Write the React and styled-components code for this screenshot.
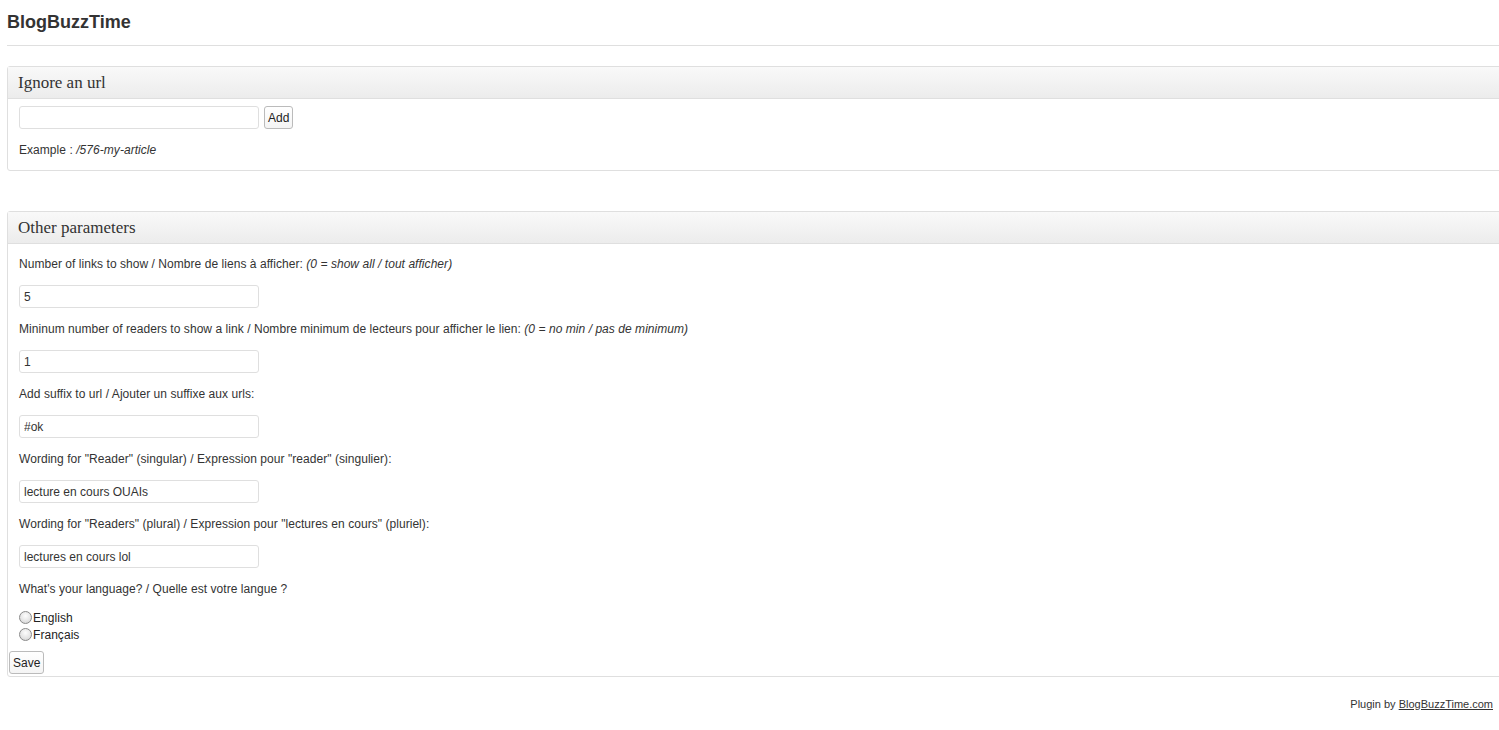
import React from "react";
import styled, { createGlobalStyle } from "styled-components";

const Global = createGlobalStyle`
  html, body { margin: 0; padding: 0; background: #fff; overflow: hidden; }
  body { font-family: "Liberation Sans", Arial, sans-serif; font-size: 12px; color: #333; }
  * { box-sizing: border-box; }
`;

const Page = styled.div`
  padding: 0 0 0 7px;
  width: 1499px;
  overflow: hidden;
`;

const Title = styled.h2`
  margin: 0;
  padding: 11px 0 0 0;
  height: 45px;
  font-size: 18px;
  font-weight: bold;
  color: #333;
  line-height: 22px;
`;

const Rule = styled.div`
  height: 1px;
  background: #dfdfdf;
  margin-bottom: 20px;
`;

const Panel = styled.div`
  border: 1px solid #dfdfdf;
  border-radius: 3px;
  background: #fff;
  width: 1510px;
  margin-bottom: ${(p) => p.$mb || 0}px;
`;

const PanelHeader = styled.h3`
  margin: 0;
  height: 32px;
  padding: 1px 10px 0 10px;
  display: flex;
  align-items: center;
  font-family: Georgia, "Liberation Serif", "DejaVu Serif", serif;
  font-weight: normal;
  font-size: 17px;
  color: #333;
  background: linear-gradient(to bottom, #f9f9f9, #ececec);
  border-bottom: 1px solid #dfdfdf;
`;

const Inside = styled.div`
  padding: ${(p) => p.$pad || "0 11px"};
`;

const InlineRow = styled.div`
  display: flex;
  align-items: center;
  gap: 5px;
`;

const TextInput = styled.input`
  width: 240px;
  height: 23px;
  border: 1px solid #dfdfdf;
  border-radius: 3px;
  padding: 2px 4px;
  font-family: "Liberation Sans", Arial, sans-serif;
  font-size: 12px;
  color: #333;
  background: #fff;
  outline: none;
`;

const Button = styled.button`
  height: 23px;
  padding: 0 3px;
  border: 1px solid #bbb;
  border-radius: 3px;
  background: linear-gradient(to bottom, #fff, #f4f4f4);
  font-family: "Liberation Sans", Arial, sans-serif;
  font-size: 12px;
  color: #222;
  cursor: pointer;
`;

const Text = styled.p`
  margin: ${(p) => p.$mt || 0}px 0 0 0;
  padding-top: 1px;
  line-height: 18px;
  font-size: 12px;
  letter-spacing: 0.05px;
  color: #333;
`;

const Field = styled.div`
  display: flex;
  flex-direction: column;
  align-items: flex-start;
  gap: 12px;
  margin-top: 11px;
  &:first-child { margin-top: 10px; }
`;

const RadioList = styled.div`
  display: flex;
  flex-direction: column;
  margin-top: 11px;
`;

const RadioLabel = styled.label`
  display: flex;
  align-items: center;
  height: 17px;
  font-size: 12px;
  letter-spacing: 0.05px;
  color: #222;
`;

const Radio = styled.input`
  appearance: none;
  width: 13px;
  height: 13px;
  margin: 0 1px 0 0;
  border-radius: 50%;
  border: 1px solid #8a8a8a;
  background: radial-gradient(circle at 50% 35%, #fdfdfd 0%, #e6e6e6 55%, #cfcfcf 100%);
`;

const SaveRow = styled.div`
  padding: 8px 1px 2px 1px;
`;

const Footer = styled.div`
  display: flex;
  justify-content: flex-end;
  padding: 21px 6px 0 0;
  font-size: 11px;
  color: #333;
  a { color: #333; text-decoration: underline; }
`;

const fields = [
  {
    label: (
      <>
        Number of links to show / Nombre de liens à afficher: <i>(0 = show all / tout afficher)</i>
      </>
    ),
    value: "5",
  },
  {
    label: (
      <>
        Mininum number of readers to show a link / Nombre minimum de lecteurs pour afficher le lien:{" "}
        <i>(0 = no min / pas de minimum)</i>
      </>
    ),
    value: "1",
  },
  { label: "Add suffix to url / Ajouter un suffixe aux urls:", value: "#ok" },
  {
    label: 'Wording for "Reader" (singular) / Expression pour "reader" (singulier):',
    value: "lecture en cours OUAIs",
  },
  {
    label: 'Wording for "Readers" (plural) / Expression pour "lectures en cours" (pluriel):',
    value: "lectures en cours lol",
  },
];

export default function App() {
  return (
    <Page>
      <Global />
      <Title>BlogBuzzTime</Title>
      <Rule />
      <Panel $mb={40}>
        <PanelHeader>Ignore an url</PanelHeader>
        <Inside $pad="7px 11px 11px 11px">
          <InlineRow>
            <TextInput type="text" defaultValue="" />
            <Button>Add</Button>
          </InlineRow>
          <Text $mt={11}>
            Example : <i>/576-my-article</i>
          </Text>
        </Inside>
      </Panel>
      <Panel>
        <PanelHeader>Other parameters</PanelHeader>
        <Inside>
          {fields.map((f, i) => (
            <Field key={i}>
              <Text>{f.label}</Text>
              <TextInput type="text" defaultValue={f.value} />
            </Field>
          ))}
          <Field>
            <Text>What's your language? / Quelle est votre langue ?</Text>
          </Field>
          <RadioList>
            <RadioLabel>
              <Radio type="radio" name="lang" />
              English
            </RadioLabel>
            <RadioLabel>
              <Radio type="radio" name="lang" />
              Français
            </RadioLabel>
          </RadioList>
        </Inside>
        <SaveRow>
          <Button>Save</Button>
        </SaveRow>
      </Panel>
      <Footer>
        <span>
          Plugin by <a href="#">BlogBuzzTime.com</a>
        </span>
      </Footer>
    </Page>
  );
}
